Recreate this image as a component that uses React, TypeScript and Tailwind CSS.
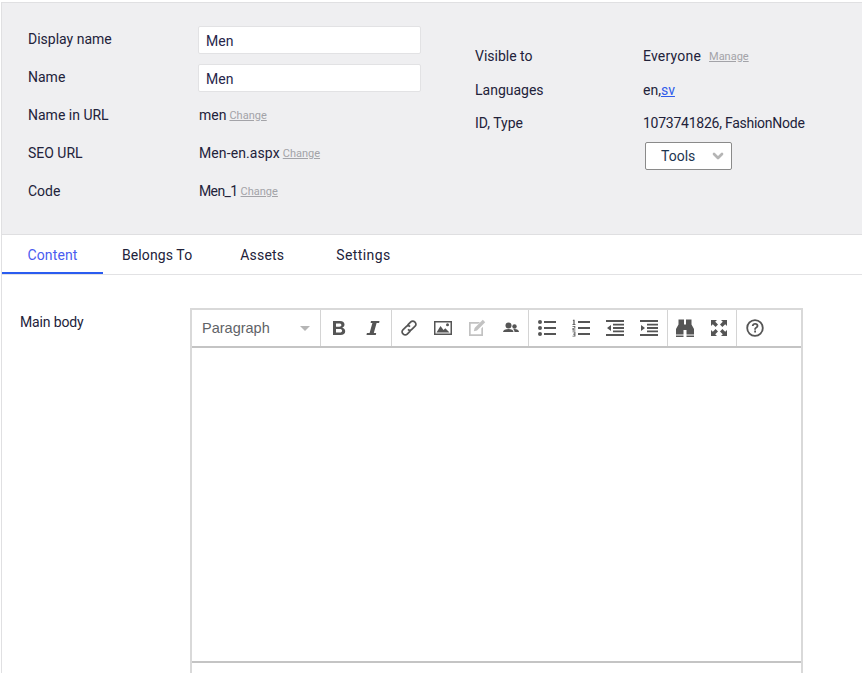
import { ReactNode } from 'react';
import { ChevronDown } from 'lucide-react';

function SmallLink({ children }: { children: ReactNode }) {
  return <a className="mt-[2px] ml-[3px] text-[11px] text-[#a3a3a8] underline">{children}</a>;
}

function Field({ label, children }: { label: string; children: ReactNode }) {
  return (
    <div className="flex h-[38px] items-center">
      <div className="w-[171px] shrink-0">{label}</div>
      {children}
    </div>
  );
}

function TextBox({ value }: { value: string }) {
  return (
    <div className="-ml-px mt-[2px] flex h-[28px] w-[223px] items-center rounded-[2px] border border-[#e2e2e4] bg-white pt-[2px] pl-[7px] text-[#26264a]">
      {value}
    </div>
  );
}

function InfoRow({ label, children, h }: { label: string; children: ReactNode; h: string }) {
  return (
    <div className={`flex items-center ${h}`}>
      <div className="w-[168px] shrink-0">{label}</div>
      {children}
    </div>
  );
}

function Group({ children, w, last }: { children: ReactNode; w: string; last?: boolean }) {
  return (
    <div className={`flex h-full items-center justify-center ${w} ${last ? '' : 'border-r border-[#d4d4d4]'}`}>
      {children}
    </div>
  );
}

function Icon({ children, muted }: { children: ReactNode; muted?: boolean }) {
  return (
    <span className="flex w-[34px] items-center justify-center">
      <svg
        viewBox="0 0 18 18"
        className={`h-[18px] w-[18px] ${muted ? 'text-[#c2c2c2]' : 'text-[#555555]'}`}
        fill="currentColor"
      >
        {children}
      </svg>
    </span>
  );
}

const tabs = [
  { label: 'Belongs To', cls: 'ml-[19px] tracking-[0.1px]' },
  { label: 'Assets', cls: 'ml-[48px] tracking-[0.2px]' },
  { label: 'Settings', cls: 'ml-[52px] tracking-[0.4px]' },
];

export default function App() {
  return (
    <div className="h-[673px] w-[862px] overflow-hidden bg-white pt-[2px] pl-px font-['Roboto',sans-serif] text-[14px] text-[#22223a]">
      <div className="h-full border-t border-l border-[#e0e0e2]">
        <div className="flex h-[232px] border-b border-[#dfdfe1] bg-[#efeff1] pt-[17px] pl-[26px]">
          <div className="w-[447px]">
            <Field label="Display name"><TextBox value="Men" /></Field>
            <Field label="Name"><TextBox value="Men" /></Field>
            <Field label="Name in URL"><span>men</span><SmallLink>Change</SmallLink></Field>
            <Field label="SEO URL"><span className="tracking-[0.1px]">Men-en.aspx</span><SmallLink>Change</SmallLink></Field>
            <Field label="Code"><span className="tracking-[-0.6px]">Men_1</span><SmallLink>Change</SmallLink></Field>
          </div>
          <div className="pt-[19px]">
            <InfoRow label="Visible to" h="h-[34px]">
              <span className="tracking-[0.2px]">Everyone</span>
              <span className="ml-[5px] flex"><SmallLink>Manage</SmallLink></span>
            </InfoRow>
            <InfoRow label="Languages" h="h-[34px]">
              <span>en,<a className="text-[#2f5bea] underline">sv</a></span>
            </InfoRow>
            <InfoRow label="ID, Type" h="h-[33px]">
              <span className="tracking-[-0.25px]">1073741826, FashionNode</span>
            </InfoRow>
            <div className="ml-[170px] mt-[2px] flex h-[28px] w-[87px] items-center rounded-[2px] border border-[#8a8a8a] bg-white pl-[15px] text-[#1d3550]">
              Tools
              <ChevronDown className="ml-[15px] h-[16px] w-[16px] text-[#b5b5b5]" strokeWidth={4} />
            </div>
          </div>
        </div>

        <div className="flex h-[40px] items-stretch border-b border-[#e2e2e4]">
          <div className="flex w-[101px] items-center justify-center border-b-2 border-[#2a5cf0] pt-[3px] tracking-[0.1px] text-[#4a5cf0]">Content</div>
          {tabs.map((t) => (
            <div key={t.label} className={`flex items-center pt-[1px] ${t.cls}`}>{t.label}</div>
          ))}
        </div>

        <div className="flex pt-[33px] pl-[18px]">
          <div className="w-[170px] shrink-0 pt-[4px] tracking-[-0.15px]">Main body</div>
          <div className="h-[400px] w-[613px] shrink-0 border-2 border-b-0 border-[#d9d9d9]">
            <div className="flex h-[38px] items-center border-b-2 border-[#c4c4c4]">
              <div className="flex h-full w-[129px] items-center justify-between border-r border-[#d4d4d4] pt-[1px] pr-[10px] pl-[10px] font-['Liberation_Sans',sans-serif] text-[14.5px] text-[#5f6368]">
                Paragraph
                <span className="h-0 w-0 border-x-[5px] border-t-[5px] border-x-transparent border-t-[#b5b5b5]" />
              </div>
              <Group w="w-[71px]">
                <Icon>
                  <path fillRule="evenodd" d="M3 2h7c3 0 4.500 1.500 4.500 3.600 0 1.500-.8 2.600-2.200 3.100 1.800.4 2.900 1.700 2.900 3.500C15.200 14.800 13.400 16 10.500 16H3zm3 2.400v3.400h3.300c1.300 0 2.100-.6 2.100-1.700s-.8-1.700-2.100-1.700zm0 5.700v3.500h3.800c1.400 0 2.300-.6 2.300-1.800s-.9-1.700-2.300-1.700z" />
                </Icon>
                <Icon>
                  <path d="M7 2h8.500l-.4 1.900h-2.500L9.800 14.100h2.400L11.800 16H2.500l.4-1.900h2.700L8.400 3.900H6.600z" />
                </Icon>
              </Group>
              <Group w="w-[137px]">
                <Icon>
                  <g fill="none" stroke="currentColor" strokeWidth="1.700">
                    <path d="M7.600 6.200 10.800 2.900a2.700 2.700 0 0 1 3.900 0l.4.400a2.700 2.700 0 0 1 0 3.900l-3.300 3.200a2.700 2.700 0 0 1-3.800 0" />
                    <path d="M10.400 11.800 7.200 15.100a2.700 2.700 0 0 1-3.900 0l-.4-.4a2.700 2.700 0 0 1 0-3.900l3.300-3.200a2.700 2.700 0 0 1 3.800 0" />
                  </g>
                </Icon>
                <Icon>
                  <path fillRule="evenodd" d="M0 2h18v14H0zm1.500 1.500v11h15v-11z" />
                  <path d="M2.500 13.500 6.500 7l3 4 1.800-1.800 4.200 4.300z" />
                  <circle cx="13.500" cy="5.800" r="1.500" />
                </Icon>
                <Icon muted>
                  <path fillRule="evenodd" d="M1 3h11l-1.700 1.700H2.700v10.600h10.600V9.500L15 7.800V17H1z" />
                  <path d="M14.800.8 17.200 3.200 9 11.400l-3.200.8.800-3.200z" />
                </Icon>
                <Icon>
                  <circle cx="6.500" cy="6.500" r="3" />
                  <circle cx="12.500" cy="7.500" r="2.200" />
                  <path d="M1 13c0-2 2.500-3 5.500-3s5 1 5 3zM12.500 13c0-1-.3-2-1.200-2.800 .4-.1.900-.2 1.400-.2 2.300 0 4.300 1 4.300 3z" />
                </Icon>
              </Group>
              <Group w="w-[139px]">
                <Icon>
                  <circle cx="2" cy="3" r="2" />
                  <circle cx="2" cy="9" r="2" />
                  <circle cx="2" cy="15" r="2" />
                  <path d="M6 2h12v2H6zM6 8h12v2H6zM6 14h12v2H6z" />
                </Icon>
                <Icon>
                  <path d="M1 .8h1.600v4.400H3.500v.8H.4v-.8h1V1.700H.8zM.5 7h2.800v2.600H1.500v1h1.900v.8H.5V9h1.900V7.800H.5zM.5 12.500h2.900v5H.5v-.8h1.900v-1.300H1v-.7h1.400v-1.400H.5z" />
                  <path d="M6 2h12v2H6zM6 8h12v2H6zM6 14h12v2H6z" />
                </Icon>
                <Icon>
                  <path d="M0 1h18v2H0zM0 15h18v2H0zM7 4.800h11v1.800H7zM7 8.100h11v1.800H7zM7 11.400h11v1.800H7zM5 6v6L1 9z" />
                </Icon>
                <Icon>
                  <path d="M0 1h18v2H0zM0 15h18v2H0zM7 4.800h11v1.800H7zM7 8.100h11v1.800H7zM7 11.400h11v1.800H7zM1 6v6l4-3z" />
                </Icon>
              </Group>
              <Group w="w-[69px]">
                <Icon>
                  <path d="M2.500.5h5.500v5h2v-5h5.500v5L18 10v5.500h-7.500V11h-3v4.500H0V10l2.500-4.500z" />
                  <path d="M0 16.500h7.500V18H0zM10.500 16.500H18V18h-7.500z" />
                </Icon>
                <Icon>
                  <path d="M1 1h6L5.200 2.800 8 5.600 5.600 8 2.800 5.200 1 7zM17 1v6l-1.800-1.800L12.400 8 10 5.600l2.800-2.800L11 1zM1 17v-6l1.800 1.800L5.600 10 8 12.400 5.200 15.200 7 17zM17 17h-6l1.800-1.800L10 12.400 12.400 10l2.800 2.800L17 11z" />
                </Icon>
              </Group>
              <Group w="w-[35px]" last>
                <Icon>
                  <circle cx="9" cy="9" r="7.800" fill="none" stroke="currentColor" strokeWidth="1.800" />
                  <path d="M5.800 7c.2-1.900 1.500-2.900 3.400-2.900s3.200 1 3.200 2.600c0 1.300-.7 1.900-1.600 2.500-.7.500-.9.800-.9 1.500H8.200c0-1.200.3-1.800 1.200-2.400.8-.5 1.200-.9 1.200-1.500 0-.7-.6-1.100-1.400-1.100-.9 0-1.400.5-1.600 1.300zM8.200 11.500h1.800v1.900H8.200z" />
                </Icon>
              </Group>
            </div>
            <div className="h-[315px] border-b-2 border-[#c4c4c4]" />
          </div>
        </div>
      </div>
    </div>
  );
}
